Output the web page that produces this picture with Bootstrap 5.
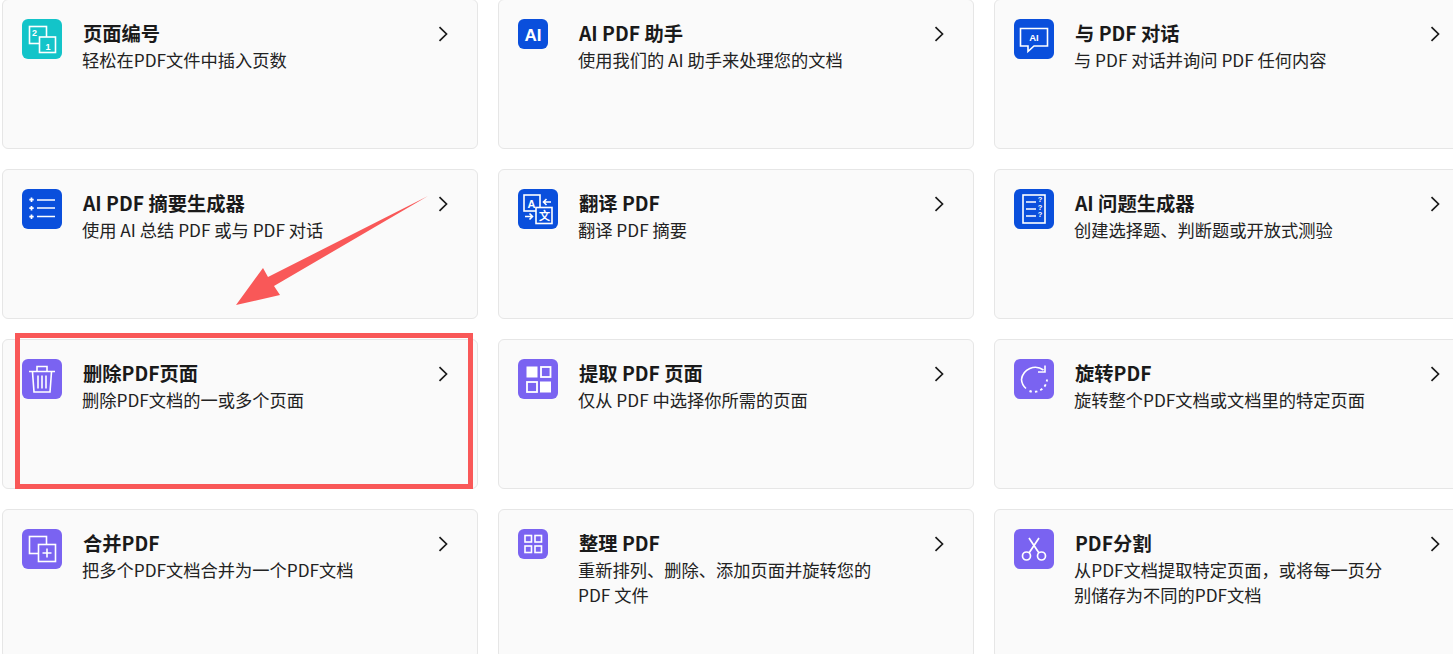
<!DOCTYPE html>
<html lang="zh-CN">

<head>
    <meta charset="UTF-8">
    <meta name="viewport" content="width=device-width, initial-scale=1.0">
    <title>PDF 工具</title>
    <link href="https://cdn.jsdelivr.net/npm/bootstrap@5.3.0/dist/css/bootstrap.min.css" rel="stylesheet">
    <style>
        html, body {
            height: 654px;
            overflow: hidden;
            background: #fff;
        }

        body {
            font-family: "Noto Sans CJK SC", "Noto Sans", sans-serif;
            color: #1a1a1a;
            position: relative;
        }

        .tool-grid {
            grid-template-columns: repeat(3, 476px);
            grid-auto-rows: 150px;
            gap: 20px;
            margin: -1px 0 0 2px;
            width: 1468px;
        }

        .tool-card {
            background: #fafafa;
            border: 1px solid #e6e6e6;
            border-radius: 6px;
            padding: 19px 19px 0 19px;
        }

        .tool-icon {
            width: 40px;
            height: 40px;
            border-radius: 6px;
            flex: none;
            display: block;
            margin-right: 20px;
        }

        .tool-icon.is-small {
            width: 30px;
            height: 30px;
            margin-right: 30px;
        }

        .tool-icon text {
            font-family: "Liberation Sans", sans-serif;
            font-weight: 700;
            fill: #fff;
        }

        .tool-body {
            width: 330px;
            flex: none;
        }

        .tool-title {
            font-size: 19.3px;
            font-weight: 700;
            line-height: 28px;
            margin: 0;
            padding-left: 1px;
            color: #1a1a1a;
        }

        .tool-desc {
            font-size: 17.25px;
            line-height: 25px;
            margin: 0;
            color: #222;
        }

        .tool-arrow {
            position: absolute;
            left: 434px;
            top: 26px;
        }

        .mark-box {
            position: absolute;
            left: 15px;
            top: 333px;
            width: 458px;
            height: 156px;
            border: 5px solid #f95858;
            pointer-events: none;
        }

        .mark-arrow {
            position: absolute;
            left: 230px;
            top: 190px;
            pointer-events: none;
        }
    </style>
</head>

<body>
    <div class="tool-grid d-grid">
        <div class="tool-card position-relative d-flex">
            <svg class="tool-icon" viewBox="0 0 40 40">
                <rect width="40" height="40" fill="#13c4c9"/>
                <rect x="7.500" y="7.500" width="17" height="17" fill="none" stroke="#fff" stroke-width="1.600"/>
                <rect x="17.500" y="18" width="16" height="15.500" fill="#13c4c9" stroke="#fff" stroke-width="1.600"/>
                <text x="10" y="16.500" font-size="9">2</text>
                <text x="23.500" y="30.500" font-size="9">1</text>
            </svg>
            <div class="tool-body">
                <h3 class="tool-title">页面编号</h3>
                <p class="tool-desc">轻松在PDF文件中插入页数</p>
            </div>
            <svg class="tool-arrow" width="14" height="16" viewBox="0 0 14 16"><path d="M2.500 1.200 9.500 8 2.500 14.800" fill="none" stroke="#1a1a1a" stroke-width="1.700"/></svg>
        </div>

        <div class="tool-card position-relative d-flex">
            <svg class="tool-icon is-small" viewBox="0 0 30 30">
                <rect width="30" height="30" fill="#0a4fdc"/>
                <text x="15" y="21.500" font-size="17" text-anchor="middle">AI</text>
            </svg>
            <div class="tool-body">
                <h3 class="tool-title">AI PDF 助手</h3>
                <p class="tool-desc">使用我们的 AI 助手来处理您的文档</p>
            </div>
            <svg class="tool-arrow" width="14" height="16" viewBox="0 0 14 16"><path d="M2.500 1.200 9.500 8 2.500 14.800" fill="none" stroke="#1a1a1a" stroke-width="1.700"/></svg>
        </div>

        <div class="tool-card position-relative d-flex">
            <svg class="tool-icon" viewBox="0 0 40 40">
                <rect width="40" height="40" fill="#0a4fdc"/>
                <path d="M6.500 9.500H33.500V27H20L14 32.500V27H6.500Z" fill="none" stroke="#fff" stroke-width="1.600"/>
                <text x="20" y="22" font-size="9.500" text-anchor="middle">AI</text>
            </svg>
            <div class="tool-body">
                <h3 class="tool-title">与 PDF 对话</h3>
                <p class="tool-desc">与 PDF 对话并询问 PDF 任何内容</p>
            </div>
            <svg class="tool-arrow" width="14" height="16" viewBox="0 0 14 16"><path d="M2.500 1.200 9.500 8 2.500 14.800" fill="none" stroke="#1a1a1a" stroke-width="1.700"/></svg>
        </div>

        <div class="tool-card position-relative d-flex">
            <svg class="tool-icon" viewBox="0 0 40 40">
                <rect width="40" height="40" fill="#0a4fdc"/>
                <path d="M15 11H33M15 19H33M15 27.500H33" stroke="#fff" stroke-width="1.700"/>
                <path d="M9.500 8.500V13M7.300 10.700H11.700M9.500 17V21.500M7.300 19.200H11.700M9.500 25.500V30M7.300 27.700H11.700" stroke="#fff" stroke-width="1.700"/>
            </svg>
            <div class="tool-body">
                <h3 class="tool-title">AI PDF 摘要生成器</h3>
                <p class="tool-desc">使用 AI 总结 PDF 或与 PDF 对话</p>
            </div>
            <svg class="tool-arrow" width="14" height="16" viewBox="0 0 14 16"><path d="M2.500 1.200 9.500 8 2.500 14.800" fill="none" stroke="#1a1a1a" stroke-width="1.700"/></svg>
        </div>

        <div class="tool-card position-relative d-flex">
            <svg class="tool-icon" viewBox="0 0 40 40">
                <rect width="40" height="40" fill="#0a4fdc"/>
                <rect x="6" y="6" width="16" height="16" fill="none" stroke="#fff" stroke-width="1.600"/>
                <rect x="18" y="18.500" width="16" height="16" fill="#0a4fdc" stroke="#fff" stroke-width="1.600"/>
                <text x="9.500" y="18.500" font-size="11">A</text>
                <text x="26" y="30.500" font-size="11" text-anchor="middle">文</text>
                <path d="M33 13H26M28.500 10 25.500 13 28.500 16M7 27.500H14M11.500 24.500 14.500 27.500 11.500 30.500" fill="none" stroke="#fff" stroke-width="1.600"/>
            </svg>
            <div class="tool-body">
                <h3 class="tool-title">翻译 PDF</h3>
                <p class="tool-desc">翻译 PDF 摘要</p>
            </div>
            <svg class="tool-arrow" width="14" height="16" viewBox="0 0 14 16"><path d="M2.500 1.200 9.500 8 2.500 14.800" fill="none" stroke="#1a1a1a" stroke-width="1.700"/></svg>
        </div>

        <div class="tool-card position-relative d-flex">
            <svg class="tool-icon" viewBox="0 0 40 40">
                <rect width="40" height="40" fill="#0a4fdc"/>
                <rect x="9" y="6" width="22" height="28" fill="none" stroke="#fff" stroke-width="1.600"/>
                <path d="M12 13H22M12 20H22M12 27H22" stroke="#fff" stroke-width="1.700"/>
                <text x="26" y="13" font-size="7.500" text-anchor="middle">?</text>
                <text x="26" y="20.500" font-size="7.500" text-anchor="middle">?</text>
                <text x="26" y="28" font-size="7.500" text-anchor="middle">?</text>
            </svg>
            <div class="tool-body">
                <h3 class="tool-title">AI 问题生成器</h3>
                <p class="tool-desc">创建选择题、判断题或开放式测验</p>
            </div>
            <svg class="tool-arrow" width="14" height="16" viewBox="0 0 14 16"><path d="M2.500 1.200 9.500 8 2.500 14.800" fill="none" stroke="#1a1a1a" stroke-width="1.700"/></svg>
        </div>

        <div class="tool-card position-relative d-flex">
            <svg class="tool-icon" viewBox="0 0 40 40">
                <rect width="40" height="40" fill="#7a63f1"/>
                <path d="M7 12.500H33M15 12V7.500H25V12M10.500 13 12 33H28L29.500 13M16 16.500V29.500M20 16.500V29.500M24 16.500V29.500" fill="none" stroke="#fff" stroke-width="1.600"/>
            </svg>
            <div class="tool-body">
                <h3 class="tool-title">删除PDF页面</h3>
                <p class="tool-desc">删除PDF文档的一或多个页面</p>
            </div>
            <svg class="tool-arrow" width="14" height="16" viewBox="0 0 14 16"><path d="M2.500 1.200 9.500 8 2.500 14.800" fill="none" stroke="#1a1a1a" stroke-width="1.700"/></svg>
        </div>

        <div class="tool-card position-relative d-flex">
            <svg class="tool-icon" viewBox="0 0 40 40">
                <rect width="40" height="40" fill="#7a63f1"/>
                <rect x="8.500" y="7.500" width="11" height="11" fill="#fff"/>
                <rect x="23" y="8" width="9.500" height="10" fill="none" stroke="#fff" stroke-width="1.800"/>
                <rect x="9" y="23" width="10" height="10" fill="none" stroke="#fff" stroke-width="1.800"/>
                <rect x="22" y="22.500" width="11" height="11" fill="#fff"/>
            </svg>
            <div class="tool-body">
                <h3 class="tool-title">提取 PDF 页面</h3>
                <p class="tool-desc">仅从 PDF 中选择你所需的页面</p>
            </div>
            <svg class="tool-arrow" width="14" height="16" viewBox="0 0 14 16"><path d="M2.500 1.200 9.500 8 2.500 14.800" fill="none" stroke="#1a1a1a" stroke-width="1.700"/></svg>
        </div>

        <div class="tool-card position-relative d-flex">
            <svg class="tool-icon" viewBox="0 0 40 40">
                <rect width="40" height="40" fill="#7a63f1"/>
                <path d="M29.500 11A14 14 0 0 0 7.500 20.500A13 13 0 0 0 12 29.500" fill="none" stroke="#fff" stroke-width="1.600"/>
                <path d="M15.500 32A13 13 0 0 0 33 20.500" fill="none" stroke="#fff" stroke-width="1.900" stroke-dasharray="2.500 3"/>
                <path d="M31 6.500V13H24" fill="none" stroke="#fff" stroke-width="1.600"/>
            </svg>
            <div class="tool-body">
                <h3 class="tool-title">旋转PDF</h3>
                <p class="tool-desc">旋转整个PDF文档或文档里的特定页面</p>
            </div>
            <svg class="tool-arrow" width="14" height="16" viewBox="0 0 14 16"><path d="M2.500 1.200 9.500 8 2.500 14.800" fill="none" stroke="#1a1a1a" stroke-width="1.700"/></svg>
        </div>

        <div class="tool-card position-relative d-flex">
            <svg class="tool-icon" viewBox="0 0 40 40">
                <rect width="40" height="40" fill="#7a63f1"/>
                <rect x="7.500" y="7.500" width="17" height="17" fill="none" stroke="#fff" stroke-width="1.600"/>
                <rect x="16.500" y="15.500" width="17" height="17" fill="#7a63f1" stroke="#fff" stroke-width="1.600"/>
                <path d="M25 19.500V28.500M20.500 24H29.500" stroke="#fff" stroke-width="1.600"/>
            </svg>
            <div class="tool-body">
                <h3 class="tool-title">合并PDF</h3>
                <p class="tool-desc">把多个PDF文档合并为一个PDF文档</p>
            </div>
            <svg class="tool-arrow" width="14" height="16" viewBox="0 0 14 16"><path d="M2.500 1.200 9.500 8 2.500 14.800" fill="none" stroke="#1a1a1a" stroke-width="1.700"/></svg>
        </div>

        <div class="tool-card position-relative d-flex">
            <svg class="tool-icon is-small" viewBox="0 0 30 30">
                <rect width="30" height="30" fill="#7a63f1"/>
                <rect x="7" y="6.500" width="6.500" height="6.500" fill="none" stroke="#fff" stroke-width="1.600"/>
                <rect x="17" y="6.500" width="6.500" height="6.500" fill="none" stroke="#fff" stroke-width="1.600"/>
                <rect x="7" y="17" width="6.500" height="6.500" fill="none" stroke="#fff" stroke-width="1.600"/>
                <rect x="17" y="17" width="6.500" height="6.500" fill="none" stroke="#fff" stroke-width="1.600"/>
            </svg>
            <div class="tool-body">
                <h3 class="tool-title">整理 PDF</h3>
                <p class="tool-desc">重新排列、删除、添加页面并旋转您的<br>PDF 文件</p>
            </div>
            <svg class="tool-arrow" width="14" height="16" viewBox="0 0 14 16"><path d="M2.500 1.200 9.500 8 2.500 14.800" fill="none" stroke="#1a1a1a" stroke-width="1.700"/></svg>
        </div>

        <div class="tool-card position-relative d-flex">
            <svg class="tool-icon" viewBox="0 0 40 40">
                <rect width="40" height="40" fill="#7a63f1"/>
                <circle cx="12.500" cy="27" r="4" fill="none" stroke="#fff" stroke-width="1.700"/>
                <circle cx="27.500" cy="27" r="4" fill="none" stroke="#fff" stroke-width="1.700"/>
                <path d="M15 24 25 9M25 24 15 9" fill="none" stroke="#fff" stroke-width="1.700"/>
            </svg>
            <div class="tool-body">
                <h3 class="tool-title">PDF分割</h3>
                <p class="tool-desc">从PDF文档提取特定页面，或将每一页分<br>别储存为不同的PDF文档</p>
            </div>
            <svg class="tool-arrow" width="14" height="16" viewBox="0 0 14 16"><path d="M2.500 1.200 9.500 8 2.500 14.800" fill="none" stroke="#1a1a1a" stroke-width="1.700"/></svg>
        </div>
    </div>

    <div class="mark-box"></div>
    <svg class="mark-arrow" width="204" height="122" viewBox="0 0 204 122">
        <path d="M198 6 44 96 50 105 6 115 33 78 38 87Z" fill="#f95858"/>
    </svg>
</body>

</html>
